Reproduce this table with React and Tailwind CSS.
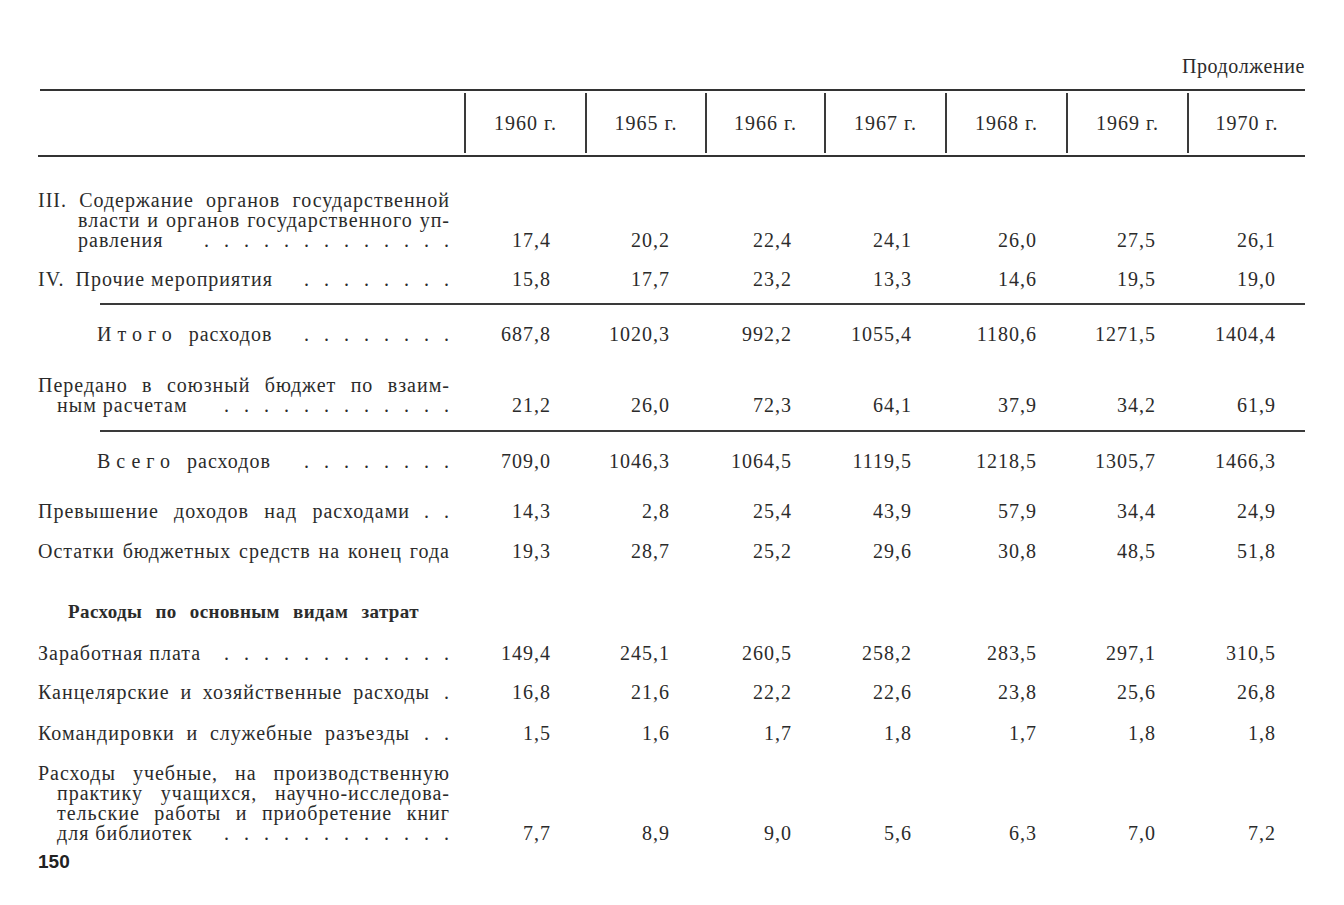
import React from "react";

// Book page 150: budget table, continuation
const cols = [
  { year: "1960 г.", w: "w-[121px]", pr: "pr-[34px]" },
  { year: "1965 г.", w: "w-[120px]", pr: "pr-[35px]" },
  { year: "1966 г.", w: "w-[119px]", pr: "pr-[32px]" },
  { year: "1967 г.", w: "w-[121px]", pr: "pr-[33px]" },
  { year: "1968 г.", w: "w-[121px]", pr: "pr-[29px]" },
  { year: "1969 г.", w: "w-[121px]", pr: "pr-[31px]" },
  { year: "1970 г.", w: "w-[118px]", pr: "pr-[29px]" },
];

const Spaced = ({ word }) => (
  <span className="pl-[59px]">
    <span className="tracking-[6px]">{word}</span>
    <span className="ml-[11px]">расходов</span>
  </span>
);

const rows = [
  {
    mt: "mt-[33px]",
    lines: [
      { t: "III. Содержание органов государственной", j: true },
      { t: "власти и органов государственного уп-", j: true, ind: "pl-[40px]" },
      { t: "равления", dots: 13, ind: "pl-[40px]" },
    ],
    vals: ["17,4", "20,2", "22,4", "24,1", "26,0", "27,5", "26,1"],
  },
  {
    mt: "mt-[19px]",
    lines: [{ t: <span>IV. <span className="ml-[5px]">Прочие</span> мероприятия</span>, dots: 8 }],
    vals: ["15,8", "17,7", "23,2", "13,3", "14,6", "19,5", "19,0"],
  },
  { rule: true, mt: "mt-[14px]" },
  {
    mt: "mt-[19px]",
    lines: [{ t: <Spaced word="Итого" />, dots: 8 }],
    vals: ["687,8", "1020,3", "992,2", "1055,4", "1180,6", "1271,5", "1404,4"],
  },
  {
    mt: "mt-[31px]",
    lines: [
      { t: "Передано в союзный бюджет по взаим-", j: true },
      { t: "ным расчетам", dots: 12, ind: "pl-[19px]" },
    ],
    vals: ["21,2", "26,0", "72,3", "64,1", "37,9", "34,2", "61,9"],
  },
  { rule: true, mt: "mt-[15px]" },
  {
    mt: "mt-[19px]",
    lines: [{ t: <Spaced word="Всего" />, dots: 8 }],
    vals: ["709,0", "1046,3", "1064,5", "1119,5", "1218,5", "1305,7", "1466,3"],
  },
  {
    mt: "mt-[30px]",
    lines: [{ t: "Превышение доходов над расходами", j: true, dots: 2 }],
    vals: ["14,3", "2,8", "25,4", "43,9", "57,9", "34,4", "24,9"],
  },
  {
    mt: "mt-[20px]",
    lines: [{ t: "Остатки бюджетных средств на конец года", j: true }],
    vals: ["19,3", "28,7", "25,2", "29,6", "30,8", "48,5", "51,8"],
  },
  { section: "Расходы по основным видам затрат", mt: "mt-[41px]" },
  {
    mt: "mt-[21px]",
    lines: [{ t: "Заработная плата", dots: 12 }],
    vals: ["149,4", "245,1", "260,5", "258,2", "283,5", "297,1", "310,5"],
  },
  {
    mt: "mt-[19px]",
    lines: [{ t: "Канцелярские и хозяйственные расходы", j: true, dots: 1 }],
    vals: ["16,8", "21,6", "22,2", "22,6", "23,8", "25,6", "26,8"],
  },
  {
    mt: "mt-[21px]",
    lines: [{ t: "Командировки и служебные разъезды", j: true, dots: 2 }],
    vals: ["1,5", "1,6", "1,7", "1,8", "1,7", "1,8", "1,8"],
  },
  {
    mt: "mt-[20px]",
    lines: [
      { t: "Расходы учебные, на производственную", j: true },
      { t: "практику учащихся, научно-исследова-", j: true, ind: "pl-[19px]" },
      { t: "тельские работы и приобретение книг", j: true, ind: "pl-[19px]" },
      { t: "для библиотек", dots: 12, ind: "pl-[19px]" },
    ],
    vals: ["7,7", "8,9", "9,0", "5,6", "6,3", "7,0", "7,2"],
  },
];

function Dots({ n }) {
  return (
    <span className="flex shrink-0">
      {Array.from({ length: n }).map((_, i) => (
        <span key={i} className="w-[20px] text-right">
          .
        </span>
      ))}
    </span>
  );
}

function Line({ line }) {
  return (
    <div className={`flex ${line.ind || ""}`}>
      <span
        className={
          line.j
            ? "flex-1 text-justify [text-align-last:justify] whitespace-nowrap"
            : "flex-1 whitespace-nowrap"
        }
      >
        {line.t}
      </span>
      {line.dots ? <Dots n={line.dots} /> : null}
    </div>
  );
}

function Row({ row }) {
  if (row.rule) {
    return <div className={`${row.mt} ml-[62px] h-[2px] bg-[#3a3a3a]`} />;
  }
  if (row.section) {
    return (
      <div
        className={`${row.mt} pl-[30px] h-[20px] leading-[20px] font-bold text-[19px] tracking-[0.4px] [word-spacing:8px]`}
      >
        {row.section}
      </div>
    );
  }
  return (
    <div className={`${row.mt} flex items-end`}>
      <div className="w-[426px] pr-[14px]">
        {row.lines.map((l, i) => (
          <Line key={i} line={l} />
        ))}
      </div>
      {cols.map((c, i) => (
        <div key={c.year} className={`${c.w} ${c.pr} text-right`}>
          {row.vals[i]}
        </div>
      ))}
    </div>
  );
}

export default function App() {
  return (
    <div className="min-h-[905px] bg-white text-[#2b2b2b] font-['Liberation_Serif','Times_New_Roman',serif] text-[20px] leading-[20px] tracking-[1px]">
      <div className="pl-[38px] pt-[56px] w-[1305px]">
        <div className="flex justify-end h-[20px] tracking-[0.6px]">Продолжение</div>

        {/* header */}
        <div className="mt-[13px] ml-[2px] h-[2px] bg-[#333]" />
        <div className="flex h-[64px]">
          <div className="w-[426px]" />
          {cols.map((c) => (
            <div
              key={c.year}
              className={`${c.w} flex items-center justify-center border-l-2 border-[#3a3a3a] my-[2px]`}
            >
              {c.year}
            </div>
          ))}
        </div>
        <div className="h-[2px] bg-[#333]" />

        {rows.map((r, i) => (
          <Row key={i} row={r} />
        ))}

        <div className="mt-[9px] h-[20px] font-['Liberation_Sans',sans-serif] font-bold text-[19px] leading-[20px] tracking-[0px] text-[#222]">
          150
        </div>
      </div>
    </div>
  );
}
